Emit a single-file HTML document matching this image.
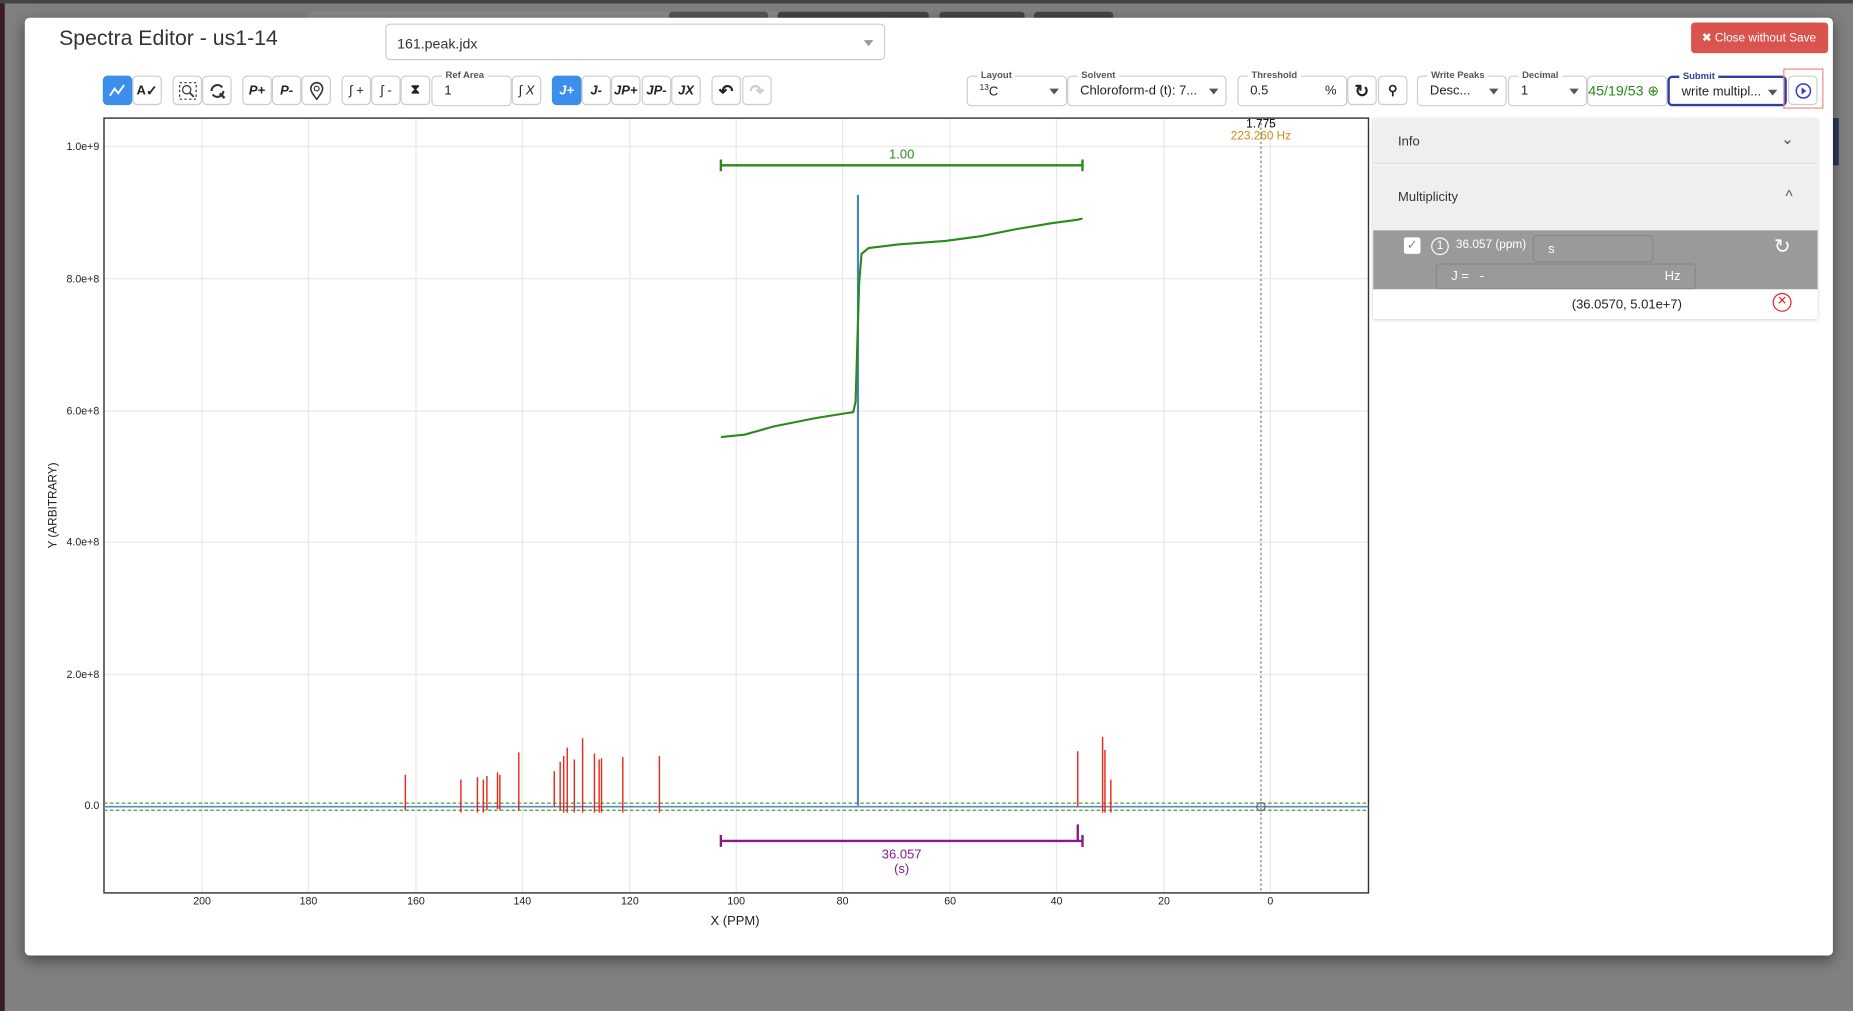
<!DOCTYPE html>
<html><head><meta charset="utf-8"><style>
*{box-sizing:border-box;margin:0;padding:0}
html,body{width:1853px;height:1011px;overflow:hidden;background:#808080;font-family:"Liberation Sans",sans-serif}
#w{position:absolute;left:0;top:0;width:1568px;height:856px;transform:scale(1.18176,1.1811);transform-origin:0 0}
.a{position:absolute}
.modal{left:21px;top:15px;width:1530px;height:794px;background:#fff;border-radius:4px;box-shadow:0 4px 12px rgba(0,0,0,.45)}
.btn{position:absolute;top:64px;width:25px;height:25px;border:1px solid #ccc;border-radius:4px;background:#fff;font-size:11px;font-style:italic;font-weight:bold;color:#222;display:flex;align-items:center;justify-content:center}
.btn.on{background:#3b8fea;border-color:#3b8fea;color:#fff}
.fld{position:absolute;top:64px;height:26px;border:1px solid #ccc;border-radius:4px;background:#fff;font-size:11px;color:#222;padding:6px 0 0 10px}
.lbl{position:absolute;top:-6px;left:8px;background:#fff;font-size:8px;color:#555;padding:0 3px;font-weight:bold}
.car{position:absolute;right:6px;top:10px;width:0;height:0;border-left:4px solid transparent;border-right:4px solid transparent;border-top:5px solid #555}
</style></head><body>
<div id="w">
<div class="a" style="left:0;top:0;width:4px;height:856px;background:#3a1a28"></div>
<div class="a" style="left:0;top:0;width:1568px;height:3px;background:#444"></div>
<div class="a" style="left:260px;top:10px;width:490px;height:8px;background:#8a8a8a;border-radius:3px"></div>
<div class="a" style="left:566px;top:10px;width:84px;height:8px;background:#555;border-radius:3px"></div>
<div class="a" style="left:658px;top:10px;width:128px;height:8px;background:#444;border-radius:3px"></div>
<div class="a" style="left:795px;top:10px;width:72px;height:8px;background:#444;border-radius:3px"></div>
<div class="a" style="left:875px;top:10px;width:67px;height:8px;background:#444;border-radius:3px"></div>
<div class="a" style="left:1551px;top:100px;width:5px;height:40px;background:#2a3a5a"></div>
<div class="a modal"></div>
<div class="a" style="left:50px;top:22px;font-size:18px;color:#333">Spectra Editor - us1-14</div>
<div class="a" style="left:326px;top:20px;width:423px;height:31px;border:1px solid #ccc;border-radius:4px;font-size:12px;color:#333;padding:9px 0 0 9px">161.peak.jdx<div class="car" style="right:9px;top:13px;border-top-color:#999"></div></div>
<div class="a" style="left:1431px;top:19px;width:116px;height:26px;background:#d9534f;border-radius:3px;color:#fff;font-size:10px;padding:8px 0 0 9px;white-space:nowrap">✖ Close without Save</div>

<div class="btn on" style="left:87px"><svg width="16" height="12"><path d="M1 10 L5 4 L8 8 L13 1" stroke="#fff" stroke-width="1.6" fill="none"/></svg></div>
<div class="btn" style="left:112px;font-style:normal">A<span style="font-size:12px">✓</span></div>
<div class="btn" style="left:146px"><svg width="16" height="16"><rect x="1" y="1" width="14" height="14" stroke="#333" stroke-dasharray="2" fill="none"/><circle cx="7" cy="7" r="3.5" stroke="#333" fill="none"/><path d="M9.5 9.5 L13 13" stroke="#333" stroke-width="1.5"/></svg></div>
<div class="btn" style="left:171px"><svg width="16" height="16"><path d="M3 8 A5 5 0 0 1 12 5 M13 8 A5 5 0 0 1 4 11" stroke="#333" stroke-width="1.8" fill="none"/><path d="M10 10 L14 14" stroke="#333" stroke-width="2"/></svg></div>
<div class="btn" style="left:205px">P+</div>
<div class="btn" style="left:230px">P-</div>
<div class="btn" style="left:255px"><svg width="12" height="16"><path d="M6 15 C2 10 1 8 1 6 A5 5 0 0 1 11 6 C11 8 10 10 6 15Z" stroke="#333" stroke-width="1.3" fill="none"/><circle cx="6" cy="6" r="2" stroke="#333" fill="none"/></svg></div>
<div class="btn" style="left:289px;font-weight:normal">∫ +</div>
<div class="btn" style="left:314px;font-weight:normal">∫ -</div>
<div class="btn" style="left:339px;font-style:normal">⧗</div>
<div class="fld" style="left:365px;width:68px">1<div class="lbl">Ref Area</div></div>
<div class="btn" style="left:433px;font-weight:normal">∫ X</div>
<div class="btn on" style="left:467px">J+</div>
<div class="btn" style="left:492px">J-</div>
<div class="btn" style="left:517px">JP+</div>
<div class="btn" style="left:543px">JP-</div>
<div class="btn" style="left:568px">JX</div>
<div class="btn" style="left:602px;font-style:normal;font-size:15px">↶</div>
<div class="btn" style="left:628px;font-style:normal;font-size:15px;color:#ccc">↷</div>

<div class="fld" style="left:818px;width:85px"><sup style="font-size:7px">13</sup>C<div class="lbl">Layout</div><div class="car"></div></div>
<div class="fld" style="left:903px;width:135px">Chloroform-d (t): 7...<div class="lbl">Solvent</div><div class="car"></div></div>
<div class="fld" style="left:1047px;width:93px">0.5<span style="position:absolute;right:8px">%</span><div class="lbl">Threshold</div></div>
<div class="btn" style="left:1140px;font-style:normal;font-size:15px">↻</div>
<div class="btn" style="left:1166px;font-style:normal">⚲</div>
<div class="fld" style="left:1199px;width:76px">Desc...<div class="lbl">Write Peaks</div><div class="car"></div></div>
<div class="fld" style="left:1276px;width:67px">1<div class="lbl">Decimal</div><div class="car"></div></div>
<div class="fld" style="left:1343px;width:68px;color:#2a8a1a;font-size:12px;padding:5px 0 0 0">45/19/53 <span style="color:#2a8a1a">⊕</span></div>
<div class="fld" style="left:1411px;width:101px;border:2px solid #3040a0">write multipl...<div class="lbl" style="color:#3040a0">Submit</div><div class="car"></div></div>
<div class="a" style="left:1509px;top:58px;width:34px;height:34px;border:1px solid #e88"></div>
<div class="btn" style="left:1513px;font-style:normal"><svg width="14" height="14"><circle cx="7" cy="7" r="6" stroke="#3040c0" stroke-width="1.3" fill="none"/><path d="M5.5 4 L9.5 7 L5.5 10Z" fill="#3040c0"/></svg></div>

<svg class="a" style="left:0;top:0" width="1568" height="856">
<g stroke="#e8e8e8" stroke-width="1">
<line x1="171" y1="100" x2="171" y2="756"/><line x1="261" y1="100" x2="261" y2="756"/><line x1="352" y1="100" x2="352" y2="756"/><line x1="442" y1="100" x2="442" y2="756"/><line x1="533" y1="100" x2="533" y2="756"/><line x1="623" y1="100" x2="623" y2="756"/><line x1="713" y1="100" x2="713" y2="756"/><line x1="804" y1="100" x2="804" y2="756"/><line x1="894" y1="100" x2="894" y2="756"/><line x1="985" y1="100" x2="985" y2="756"/><line x1="1075" y1="100" x2="1075" y2="756"/>
<line x1="88" y1="124" x2="1158" y2="124"/><line x1="88" y1="236" x2="1158" y2="236"/><line x1="88" y1="348" x2="1158" y2="348"/><line x1="88" y1="459" x2="1158" y2="459"/><line x1="88" y1="571" x2="1158" y2="571"/>
</g>
<rect x="88" y="100" width="1070" height="656" fill="none" stroke="#333" stroke-width="1.2"/>
<g font-family="Liberation Sans" font-size="9" fill="#222" text-anchor="end">
<text x="84" y="127">1.0e+9</text><text x="84" y="239">8.0e+8</text><text x="84" y="351">6.0e+8</text><text x="84" y="462">4.0e+8</text><text x="84" y="574">2.0e+8</text><text x="84" y="685">0.0</text>
</g>
<g font-family="Liberation Sans" font-size="9" fill="#222" text-anchor="middle">
<text x="171" y="766">200</text><text x="261" y="766">180</text><text x="352" y="766">160</text><text x="442" y="766">140</text><text x="533" y="766">120</text><text x="623" y="766">100</text><text x="713" y="766">80</text><text x="804" y="766">60</text><text x="894" y="766">40</text><text x="985" y="766">20</text><text x="1075" y="766">0</text>
<text x="622" y="783" font-size="11">X (PPM)</text>
</g>
<text transform="translate(48,428) rotate(-90)" font-family="Liberation Sans" font-size="10" fill="#222" text-anchor="middle">Y (ARBITRARY)</text>
<line x1="1067" y1="100" x2="1067" y2="756" stroke="#777" stroke-dasharray="2,2"/>
<text x="1067" y="108" font-family="Liberation Sans" font-size="10" text-anchor="middle">1.775</text>
<text x="1067" y="118" font-family="Liberation Sans" font-size="10" fill="#d08a10" text-anchor="middle">223.260 Hz</text>
<line x1="88" y1="680" x2="1158" y2="680" stroke="#4a9a3a" stroke-dasharray="3,2"/>
<line x1="88" y1="686" x2="1158" y2="686" stroke="#4a9a3a" stroke-dasharray="3,2"/>
<line x1="88" y1="683" x2="1158" y2="683" stroke="#5a8ac0" stroke-width="1.4"/>
<g stroke="#e8281a" stroke-width="1.2">
<line x1="343" y1="656" x2="343" y2="686"/><line x1="390" y1="660" x2="390" y2="688"/><line x1="404" y1="658" x2="404" y2="688"/><line x1="409" y1="660" x2="409" y2="688"/><line x1="412" y1="657" x2="412" y2="686"/><line x1="421" y1="654" x2="421" y2="685"/><line x1="423" y1="656" x2="423" y2="686"/><line x1="439" y1="637" x2="439" y2="686"/><line x1="469" y1="653" x2="469" y2="683"/><line x1="474" y1="645" x2="474" y2="686"/><line x1="477" y1="640" x2="477" y2="688"/><line x1="480" y1="633" x2="480" y2="688"/><line x1="486" y1="643" x2="486" y2="688"/><line x1="493" y1="625" x2="493" y2="688"/><line x1="503" y1="638" x2="503" y2="688"/><line x1="507" y1="643" x2="507" y2="688"/><line x1="509" y1="642" x2="509" y2="688"/><line x1="527" y1="641" x2="527" y2="688"/><line x1="558" y1="640" x2="558" y2="688"/><line x1="912" y1="636" x2="912" y2="683"/><line x1="933" y1="624" x2="933" y2="688"/><line x1="935" y1="635" x2="935" y2="688"/><line x1="940" y1="660" x2="940" y2="688"/>
</g>
<line x1="726" y1="682" x2="726" y2="165" stroke="#4a80c0" stroke-width="1.8"/>
<path d="M610 370 L630 368 L655 361 L690 354 L715 350 L722 349 L724 340 L727 240 L729 215 L735 210 L760 207 L800 204 L830 200 L860 194 L890 189 L912 186 L916 185" stroke="#2a8a1a" stroke-width="1.8" fill="none"/>
<path d="M610 140 L916 140 M610 135 L610 145 M916 135 L916 145" stroke="#2a8a1a" stroke-width="2" fill="none"/>
<text x="763" y="134" font-family="Liberation Sans" font-size="11" fill="#2a8a1a" text-anchor="middle">1.00</text>
<path d="M610 712 L916 712 M610 707 L610 717 M916 707 L916 717 M912 698 L912 712" stroke="#8a1a8a" stroke-width="2" fill="none"/>
<text x="763" y="727" font-family="Liberation Sans" font-size="11" fill="#8a1a8a" text-anchor="middle">36.057</text>
<text x="763" y="739" font-family="Liberation Sans" font-size="11" fill="#8a1a8a" text-anchor="middle">(s)</text>
<circle cx="1067" cy="683" r="3.5" stroke="#666" fill="none"/>
</svg>

<div class="a" style="left:1162px;top:100px;width:376px;height:170px;box-shadow:0 1px 3px rgba(0,0,0,.2)">
<div class="a" style="left:0;top:0;width:376px;height:39px;background:#efefef;border-bottom:1px solid #ddd;font-size:11px;color:#333;padding:14px 0 0 21px">Info<span style="position:absolute;right:20px;top:10px;font-size:13px;color:#555">⌄</span></div>
<div class="a" style="left:0;top:40px;width:376px;height:55px;background:#efefef;font-size:11px;color:#333;padding:21px 0 0 21px">Multiplicity<span style="position:absolute;right:21px;top:18px;font-size:13px;color:#555">^</span></div>
<div class="a" style="left:0;top:95px;width:376px;height:50px;background:#9a9a9a"></div>
<div class="a" style="left:26px;top:101px;width:14px;height:14px;background:#fff;border-radius:2px;font-size:11px;color:#888;text-align:center;line-height:14px">✓</div>
<div class="a" style="left:49px;top:101px;width:15px;height:15px;border:1px solid #fff;border-radius:50%;font-size:10px;color:#fff;text-align:center;line-height:13px">1</div>
<div class="a" style="left:70px;top:102px;font-size:10px;color:#fff">36.057 (ppm)</div>
<div class="a" style="left:135px;top:99px;width:102px;height:23px;border:1px solid #888;border-radius:3px;font-size:11px;color:#fff;padding:5px 0 0 12px">s</div>
<div class="a" style="left:53px;top:123px;width:220px;height:22px;border:1px solid #888;border-radius:3px;font-size:11px;color:#fff;padding:4px 0 0 12px">J =&nbsp;&nbsp;&nbsp;-<span style="position:absolute;right:12px">Hz</span></div>
<div class="a" style="left:339px;top:99px;font-size:17px;color:#fff">↻</div>
<div class="a" style="left:0;top:145px;width:376px;height:25px;background:#fff;font-size:11px;color:#222;padding:7px 0 0 168px">(36.0570, 5.01e+7)</div>
<div class="a" style="left:338px;top:148px;width:16px;height:16px;border:1.5px solid #e02020;border-radius:50%;color:#e02020;font-size:10px;text-align:center;line-height:13px">✕</div>
</div>
</div>
</body></html>
